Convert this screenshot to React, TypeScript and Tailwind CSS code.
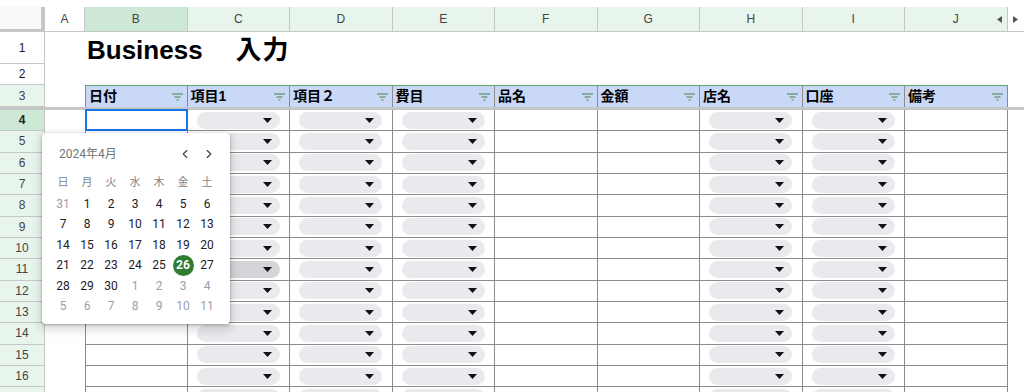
import React from 'react';
import { ChevronLeft, ChevronRight } from 'lucide-react';

const COLS = 'grid grid-cols-[45px_40px_repeat(9,102.5px)_1fr]';
const LETTERS = ['B', 'C', 'D', 'E', 'F', 'G', 'H', 'I', 'J'];
const HEADERS = ['日付', '項目1', '項目２', '費目', '品名', '金額', '店名', '口座', '備考'];
const DROPDOWN_COLS = [1, 2, 3, 6, 7];

const WEEKS = [
    [31, 1, 2, 3, 4, 5, 6],
    [7, 8, 9, 10, 11, 12, 13],
    [14, 15, 16, 17, 18, 19, 20],
    [21, 22, 23, 24, 25, 26, 27],
    [28, 29, 30, 1, 2, 3, 4],
    [5, 6, 7, 8, 9, 10, 11],
];

function FilterIcon() {
    return (
        <svg width="11" height="8" viewBox="0 0 11 8" className="shrink-0">
            <path d="M0 1h11M2.5 4h6M4.5 7h2" stroke="#6f9f80" strokeWidth="1.3" />
        </svg>
    );
}

function Chip({ dark }: { dark?: boolean }) {
    return (
        <div className="flex h-full items-center pl-[9px]">
            <div className={`flex h-[17px] w-[83px] items-center justify-end rounded-full pr-[8px] ${dark ? 'bg-[#d3d5d8]' : 'bg-[#e8eaed]'}`}>
                <svg width="9" height="5" viewBox="0 0 9 5">
                    <path d="M0 0h9L4.5 5z" fill="#111" />
                </svg>
            </div>
        </div>
    );
}

function RowHead({ n, tone, h }: { n?: number; tone: 'white' | 'light' | 'dark'; h: string }) {
    const bg = tone === 'white' ? 'bg-white' : tone === 'dark' ? 'bg-[#cde8d4] font-bold text-[#222]' : 'bg-[#e8f5ec] text-[#444]';
    return (
        <div className={`${bg} ${h} flex items-center justify-center border-r border-b border-[#c4c7c5] text-[12px]`}>
            {n}
        </div>
    );
}

function Calendar() {
    return (
        <div className="absolute left-[42px] top-[133px] z-10 h-[191px] w-[188px] rounded-[4px] bg-white shadow-[0_1px_3px_rgba(0,0,0,0.3),0_4px_8px_3px_rgba(0,0,0,0.12)] font-['Roboto','Noto_Sans_CJK_JP',sans-serif]">
            <div className="flex h-[16px] items-center pl-[17px] pr-[14px] mt-[13px]">
                <span className="text-[12px] text-[#70757a]">2024年4月</span>
                <div className="ml-auto flex items-center gap-[10px] text-[#444]">
                    <ChevronLeft size={14} strokeWidth={2} />
                    <ChevronRight size={14} strokeWidth={2} />
                </div>
            </div>
            <div className="mt-[11px] grid grid-cols-[repeat(7,24px)] pl-[9px]">
                {['日', '月', '火', '水', '木', '金', '土'].map((d) => (
                    <div key={d} className="flex h-[20.5px] items-center justify-center text-[11px] text-[#80868b]">
                        {d}
                    </div>
                ))}
                {WEEKS.map((week, wi) =>
                    week.map((d, di) => {
                        const out = (wi === 0 && d > 7) || (wi >= 4 && d < 15);
                        const selected = wi === 3 && d === 26;
                        return (
                            <div key={`${wi}-${di}`} className="flex h-[20.5px] items-center justify-center">
                                {selected ? (
                                    <span className="flex h-[21px] w-[21px] items-center justify-center rounded-full bg-[#2e7d32] text-[12px] font-bold text-white">
                                        {d}
                                    </span>
                                ) : (
                                    <span className={`text-[12px] ${out ? 'text-[#9aa0a6]' : 'text-[#202124]'}`}>{d}</span>
                                )}
                            </div>
                        );
                    })
                )}
            </div>
        </div>
    );
}

export default function App() {
    const bodyRows = [4, 5, 6, 7, 8, 9, 10, 11, 12, 13, 14, 15, 16, 17];

    return (
        <div className="relative h-[392px] w-[1024px] overflow-hidden bg-white font-['Liberation_Sans','Noto_Sans_CJK_JP',sans-serif] text-[#202124]">
            <div className="h-[7px]" />

            {/* column letters */}
            <div className={`${COLS} h-[25px]`}>
                <div className="border-r-4 border-b-[3px] border-[#c4c7c5] bg-[#f8f9fa]" />
                <div className="flex items-center justify-center border-r border-b border-[#c4c7c5] bg-white text-[12px] text-[#444]">A</div>
                {LETTERS.map((l, i) => (
                    <div
                        key={l}
                        className={`relative flex items-center justify-center border-r border-b border-[#c4c7c5] text-[12px] text-[#444] ${i === 0 ? 'bg-[#cde8d4]' : 'bg-[#e8f5ec]'}`}
                    >
                        {l}
                        {l === 'J' && (
                            <svg width="5" height="7" viewBox="0 0 5 7" className="absolute right-[5px] top-[9px]">
                                <path d="M5 0v7L0 3.5z" fill="#555" />
                            </svg>
                        )}
                    </div>
                ))}
                <div className="flex items-center pl-[5px] border-b border-[#c4c7c5] bg-white">
                    <svg width="5" height="7" viewBox="0 0 5 7">
                        <path d="M0 0v7l5-3.5z" fill="#555" />
                    </svg>
                </div>
            </div>

            {/* row 1: title */}
            <div className={`${COLS} h-[32px]`}>
                <RowHead n={1} tone="white" h="h-[32px]" />
                <div />
                <div className="flex items-end whitespace-nowrap pl-[2px] pb-[1px] text-[26px] leading-none font-bold text-black">
                    <span>Business</span>
                    <span className="ml-[33px] tracking-[1px]">入力</span>
                </div>
            </div>

            {/* row 2 */}
            <div className={`${COLS} h-[21px]`}>
                <RowHead n={2} tone="white" h="h-[21px]" />
            </div>

            {/* row 3: table headers */}
            <div className={`${COLS} h-[22px]`}>
                <RowHead n={3} tone="light" h="h-[22px]" />
                <div />
                {HEADERS.map((t, i) => (
                    <div
                        key={t}
                        className={`flex items-center justify-between border-t border-t-[#5fa86e] bg-[#c9d8f6] pl-[3px] pr-[4px] text-[14px] font-bold text-black ${i === 0 ? 'border-l border-l-[#5fa86e]' : ''} ${i === 8 ? 'border-r border-r-[#5fa86e]' : 'border-r border-r-[#8c8c8c]'}`}
                    >
                        <span>{t}</span>
                        <FilterIcon />
                    </div>
                ))}
            </div>

            {/* freeze bar */}
            <div className="h-[3px] bg-[#c4c7c5]" />

            {bodyRows.map((r) => (
                <div key={r} className={`${COLS} h-[21.33px]`}>
                    <RowHead n={r < 17 ? r : undefined} tone={r === 4 ? 'dark' : 'light'} h="h-[21.33px]" />
                    <div />
                    {LETTERS.map((l, i) => (
                        <div
                            key={l}
                            className={`relative border-b border-b-[#8c8c8c] ${i === 0 ? 'border-l border-l-[#5fa86e]' : ''} ${i === 8 ? 'border-r border-r-[#5fa86e]' : 'border-r border-r-[#8c8c8c]'}`}
                        >
                            {DROPDOWN_COLS.includes(i) && <Chip dark={r === 11 && i === 1} />}
                            {r === 4 && i === 0 && (
                                <div className="absolute -left-px -top-px right-[-1px] bottom-[-1px] border-2 border-[#1a73e8]" />
                            )}
                        </div>
                    ))}
                </div>
            ))}

            <Calendar />
        </div>
    );
}
